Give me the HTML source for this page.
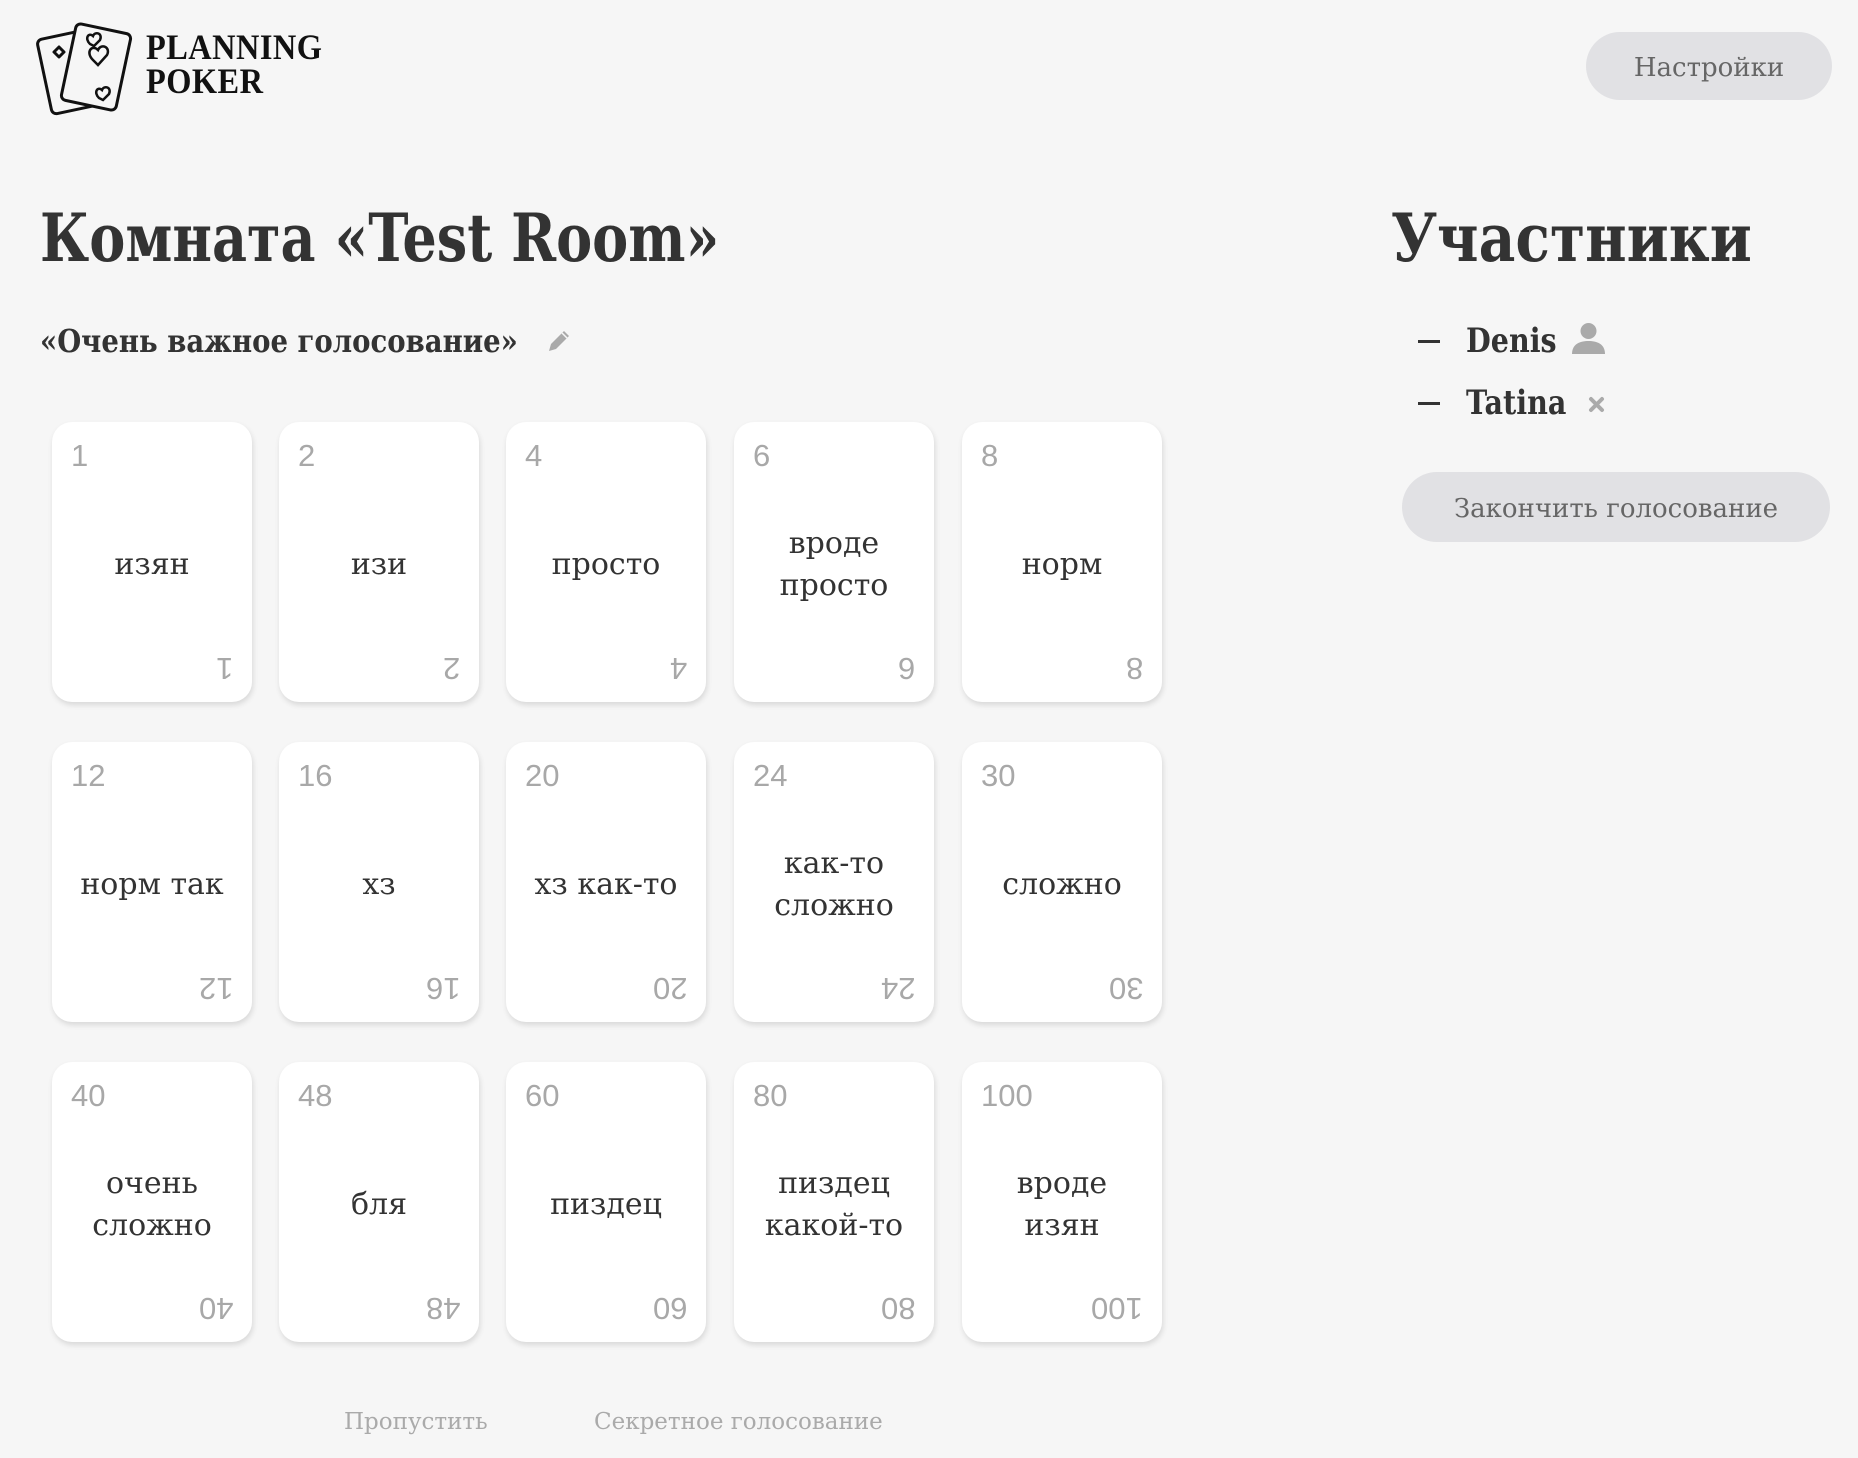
<!DOCTYPE html>
<html><head><meta charset="utf-8">
<style>
*{margin:0;padding:0;box-sizing:border-box}
body{width:1858px;height:1458px;background:#f6f6f6;position:relative;overflow:hidden;font-family:"DejaVu Serif","Liberation Serif",serif;color:#333}
.abs{position:absolute;white-space:nowrap}
.logo{left:146px;top:30px;font-family:"Liberation Serif",serif;font-weight:bold;font-size:36px;line-height:34px;color:#111;transform:scaleX(0.9);transform-origin:left;letter-spacing:0.5px}
.btn{position:absolute;background:#e1e1e4;border-radius:40px;color:#666;font-size:26px;display:flex;align-items:center;justify-content:center;padding-top:3px}
h1{position:absolute;font-size:66px;font-weight:bold;line-height:1;white-space:nowrap;transform:scaleX(0.82);transform-origin:left}
.sub{left:40px;top:322px;font-size:32px;font-weight:bold;transform:scaleX(0.86);transform-origin:left}
.card{position:absolute;width:200px;height:280px;background:#fff;border-radius:20px;box-shadow:1px 3px 6px rgba(0,0,0,.12)}
.card .n{position:absolute;left:19px;top:16px;font-family:"Liberation Sans",sans-serif;font-size:31px;color:#a8a8a8}
.card .m{position:absolute;right:19px;bottom:16px;font-family:"Liberation Sans",sans-serif;font-size:31px;color:#a8a8a8;transform:rotate(180deg)}
.card .t{position:absolute;left:0;right:0;top:5px;bottom:0;display:flex;align-items:center;justify-content:center;text-align:center;font-size:30px;line-height:42px;color:#333}
.name{font-size:34px;font-weight:bold;transform:scaleX(0.84);transform-origin:left}
.dash{position:absolute;width:22px;height:3px;background:#333}
.link{font-size:23px;color:#aaa}
</style></head><body>
<svg class="abs" style="left:0;top:0" width="140" height="125" viewBox="0 0 140 125">
<g fill="#f6f6f6" stroke="#111" stroke-width="3" stroke-linejoin="round">
<rect x="44" y="34" width="52" height="76" rx="5" transform="rotate(-12 70 72)"/>
<path d="M54 52 l5 -5 l5 5 l-5 5z" />
<rect x="68" y="28" width="56" height="78" rx="5" transform="rotate(12 96 67)"/>
</g>
<g fill="none" stroke="#111" stroke-width="2.5">
<path d="M90 44 c-6 -6 -1 -12 3 -8 c2 -5 10 -3 7 4 l-6 6z"/>
<path d="M93 60 c-8 -8 -1 -16 5 -10 c3 -7 13 -3 9 5 l-9 10z"/>
<path d="M99 98 c-6 -6 -1 -12 3 -8 c2 -5 10 -3 7 4 l-6 6z"/>
</g>
</svg>
<div class="abs logo">PLANNING<br>POKER</div>
<div class="btn" style="left:1586px;top:32px;width:246px;height:68px">Настройки</div>

<h1 style="left:40px;top:205px">Комната «Test Room»</h1>
<div class="abs sub">«Очень важное голосование»</div>
<svg class="abs" style="left:546px;top:328px" width="26" height="26" viewBox="0 0 26 26"><path d="M3 23 l2 -7 l13 -13 l5 5 l-13 13z" fill="#aaa"/><path d="M16 5 l5 5" stroke="#f6f6f6" stroke-width="1.5"/></svg>

<h1 style="left:1391px;top:205px;transform:scaleX(0.86)">Участники</h1>
<div class="dash" style="left:1418px;top:340px"></div>
<div class="abs name" style="left:1466px;top:321px">Denis</div>
<svg class="abs" style="left:1571px;top:322px" width="35" height="34" viewBox="0 0 35 34"><circle cx="17.5" cy="9" r="8" fill="#aaa"/><path d="M1 32 c0 -10 8 -13 16.5 -13 s16.5 3 16.5 13 z" fill="#aaa"/></svg>
<div class="dash" style="left:1418px;top:402px"></div>
<div class="abs name" style="left:1466px;top:383px">Tatina</div>
<svg class="abs" style="left:1588px;top:396px" width="17" height="17" viewBox="0 0 17 17"><path d="M3 3 L14 14 M14 3 L3 14" stroke="#aaa" stroke-width="4" stroke-linecap="round"/></svg>
<div class="btn" style="left:1402px;top:472px;width:428px;height:70px">Закончить голосование</div>

<div class="card" style="left:52px;top:422px"><span class="n">1</span><div class="t">изян</div><span class="m">1</span></div>
<div class="card" style="left:279px;top:422px"><span class="n">2</span><div class="t">изи</div><span class="m">2</span></div>
<div class="card" style="left:506px;top:422px"><span class="n">4</span><div class="t">просто</div><span class="m">4</span></div>
<div class="card" style="left:734px;top:422px"><span class="n">6</span><div class="t">вроде<br>просто</div><span class="m">6</span></div>
<div class="card" style="left:962px;top:422px"><span class="n">8</span><div class="t">норм</div><span class="m">8</span></div>

<div class="card" style="left:52px;top:742px"><span class="n">12</span><div class="t">норм так</div><span class="m">12</span></div>
<div class="card" style="left:279px;top:742px"><span class="n">16</span><div class="t">хз</div><span class="m">16</span></div>
<div class="card" style="left:506px;top:742px"><span class="n">20</span><div class="t">хз как-то</div><span class="m">20</span></div>
<div class="card" style="left:734px;top:742px"><span class="n">24</span><div class="t">как-то<br>сложно</div><span class="m">24</span></div>
<div class="card" style="left:962px;top:742px"><span class="n">30</span><div class="t">сложно</div><span class="m">30</span></div>

<div class="card" style="left:52px;top:1062px"><span class="n">40</span><div class="t">очень<br>сложно</div><span class="m">40</span></div>
<div class="card" style="left:279px;top:1062px"><span class="n">48</span><div class="t">бля</div><span class="m">48</span></div>
<div class="card" style="left:506px;top:1062px"><span class="n">60</span><div class="t">пиздец</div><span class="m">60</span></div>
<div class="card" style="left:734px;top:1062px"><span class="n">80</span><div class="t">пиздец<br>какой-то</div><span class="m">80</span></div>
<div class="card" style="left:962px;top:1062px"><span class="n">100</span><div class="t">вроде<br>изян</div><span class="m">100</span></div>

<div class="abs link" style="left:344px;top:1409px">Пропустить</div>
<div class="abs link" style="left:594px;top:1409px">Секретное голосование</div>
</body></html>
